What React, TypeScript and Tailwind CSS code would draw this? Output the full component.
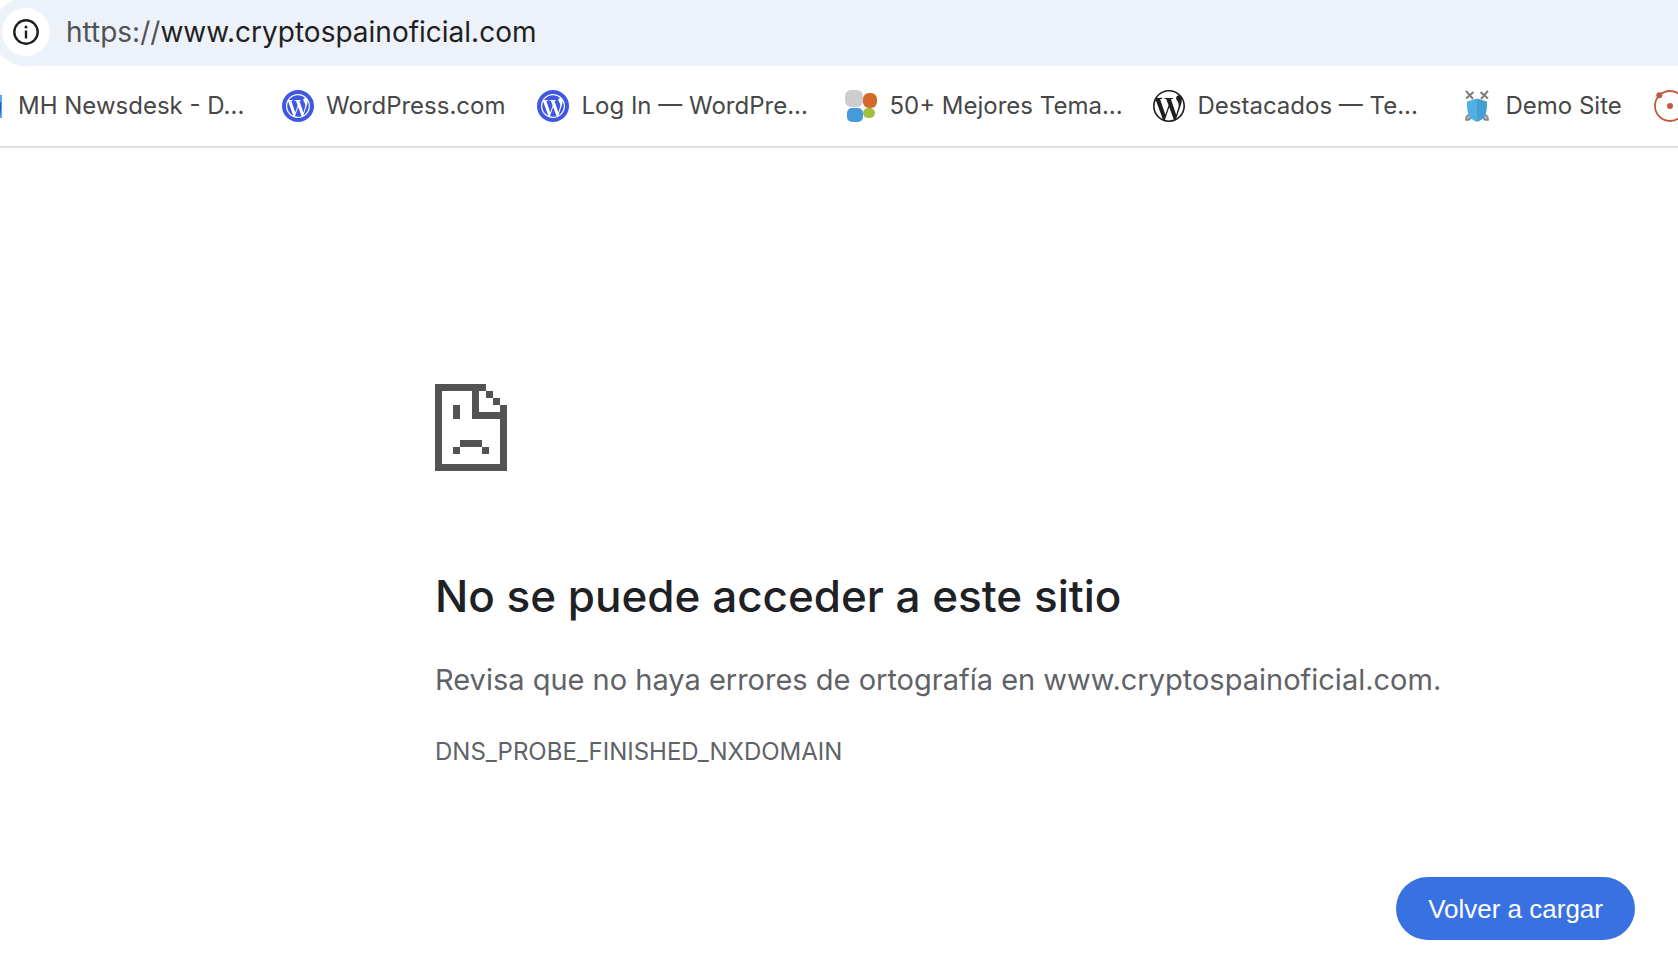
import React, { useState } from "react";
import { SiWordpress } from "react-icons/si";

type Bookmark = {
  label: string;
  icon: React.ReactNode;
  truncated?: boolean;
};

const NewsdeskIcon = () => (
  <svg viewBox="0 0 32 32" className="h-8 w-8 shrink-0">
    <rect x="4" y="5" width="24" height="23" fill="#5aa9f0" />
    <rect x="4" y="12" width="23" height="9" fill="#1b56bd" />
    <rect x="4" y="21" width="23" height="4" fill="#2f7fdd" />
  </svg>
);

const WordPressComIcon = () => (
  <span className="flex h-8 w-8 shrink-0 items-center justify-center rounded-full bg-[#3f57e1] text-white">
    <SiWordpress className="h-6 w-6" />
  </span>
);

const DotsIcon = () => (
  <svg viewBox="0 0 32 32" className="h-8 w-8 shrink-0">
    <rect x="0" y="0" width="18" height="17" rx="6" fill="#cdcdcd" />
    <rect x="18" y="3" width="14" height="15" rx="6" fill="#d5682b" />
    <rect x="2" y="18" width="16" height="14" rx="5" fill="#459bd9" />
    <rect x="18" y="18" width="12" height="10" rx="5" fill="#a2c03d" />
  </svg>
);

const ShieldIcon = () => (
  <svg viewBox="0 0 32 32" className="h-8 w-8 shrink-0" fill="none">
    <g stroke="#7d7d7d" strokeWidth="2">
      <path d="M5 .8L12 9M27 .8L20 9" />
      <path d="M5 8.500l7.500-6.500M27 8.500l-7.500-6.500" />
    </g>
    <g fill="#b5b5b5" stroke="#858585" strokeWidth="1.400">
      <path d="M8.500 24.500c-2.500.5-4 3-3.600 5.500 2.600.3 4.600-1 5-3z" />
      <path d="M23.500 24.500c2.500.5 4 3 3.600 5.500-2.600.3-4.600-1-5-3z" />
    </g>
    <path d="M16 8.500l-10 3c-.3 8 1 14 4 17 1.800 1.600 4 2.600 6 3.300z" fill="#50b0e3" />
    <path d="M16 8.500l10 3c.3 8-1 14-4 17-1.800 1.600-4 2.600-6 3.300z" fill="#469fd2" />
  </svg>
);

const OrbitIcon = () => (
  <svg viewBox="0 0 32 32" className="h-8 w-8 shrink-0">
    <circle cx="16" cy="16" r="15" fill="none" stroke="#c4583f" strokeWidth="1.800" />
    <circle cx="5.300" cy="5.300" r="3" fill="#c4583f" />
    <circle cx="16" cy="16" r="3" fill="#c4583f" />
  </svg>
);

const InfoIcon = () => (
  <svg viewBox="0 0 26 26" className="h-[26px] w-[26px]">
    <circle cx="13" cy="13" r="11.700" fill="none" stroke="#1f1f1f" strokeWidth="2.400" />
    <circle cx="13" cy="8" r="1.500" fill="#1f1f1f" />
    <path d="M13 11.500v8" stroke="#1f1f1f" strokeWidth="2.400" />
  </svg>
);

const SadPageIcon = () => (
  <svg
    viewBox="0 0 216 261"
    className="h-[87px] w-[72px]"
    fill="#535353"
    shapeRendering="crispEdges"
  >
    <path d="M0 0h153v21H132v63h63V63h21v198H0zM21 21v219h174V105H111V21z" fillRule="evenodd" />
    <path d="M153 21h21v21h-21zM174 42h21v21h-21z" />
    <path d="M54 63h21v42H54z" />
    <path d="M75 168h66v21H75zM54 189h21v21H54zM141 189h21v21h-21z" />
  </svg>
);

const bookmarks: Bookmark[] = [
  { label: "MH Newsdesk - D...", icon: <NewsdeskIcon />, truncated: true },
  { label: "WordPress.com", icon: <WordPressComIcon /> },
  { label: "Log In — WordPre...", icon: <WordPressComIcon />, truncated: true },
  { label: "50+ Mejores Tema...", icon: <DotsIcon />, truncated: true },
  {
    label: "Destacados — Te...",
    icon: <SiWordpress className="h-8 w-8 shrink-0 text-[#1e1e1e]" />,
    truncated: true,
  },
  { label: "Demo Site", icon: <ShieldIcon /> },
];

const App = () => {
  const [host, setHost] = useState("www.cryptospainoficial.com");

  return (
    <div className="min-h-screen overflow-hidden bg-white font-['Inter',sans-serif]">
      {/* Address bar */}
      <header className="overflow-hidden">
        <div className="-mt-0.5 -ml-2 flex h-[68px] items-center rounded-l-full bg-[#edf2fa] pl-2.5 text-[28px] leading-8">
          <button
            type="button"
            aria-label="Información del sitio"
            className="flex h-12 w-12 shrink-0 items-center justify-center rounded-full bg-white"
          >
            <InfoIcon />
          </button>
          <label htmlFor="address" className="ml-4 text-[#505256]">
            https://
          </label>
          <input
            id="address"
            type="text"
            value={host}
            onChange={(e) => setHost(e.target.value)}
            className="min-w-0 flex-1 bg-transparent text-[#1f1f1f] outline-none"
          />
        </div>
      </header>

      {/* Bookmarks */}
      <nav className="flex h-[82px] items-center gap-8 overflow-hidden border-b-2 border-[#e1e1e1] text-[24px] leading-8 text-[#474747]">
        {bookmarks.map((bookmark) => (
          <a
            key={bookmark.label}
            href="#"
            className="flex shrink-0 items-center gap-3 whitespace-nowrap first:-ml-[26px]"
          >
            {bookmark.icon}
            <span className={bookmark.truncated ? "w-[232px]" : ""}>{bookmark.label}</span>
          </a>
        ))}
        <a href="#" aria-label="Marcador" className="shrink-0">
          <OrbitIcon />
        </a>
      </nav>

      {/* Error message */}
      <main className="mr-[43px] ml-auto max-w-[1200px] pt-[236px]">
        <SadPageIcon />
        <h1 className="mt-[97px] text-[44px] leading-[56px] font-medium text-[#202124]">
          No se puede acceder a este sitio
        </h1>
        <p className="mt-9 text-[29px] leading-10 text-[#5f6368]">
          Revisa que no haya errores de ortografía en www.cryptospainoficial.com.
        </p>
        <p className="mt-8 text-[24px] leading-10 text-[#5f6368]">DNS_PROBE_FINISHED_NXDOMAIN</p>
        <div className="mt-[105px] flex justify-end">
          <button
            type="button"
            onClick={() => window.location.reload()}
            className="h-[63px] rounded-full bg-[#3871e0] px-8 font-['Liberation_Sans',sans-serif] text-[26px] leading-8 text-white"
          >
            Volver a cargar
          </button>
        </div>
      </main>
    </div>
  );
};

export default App;
